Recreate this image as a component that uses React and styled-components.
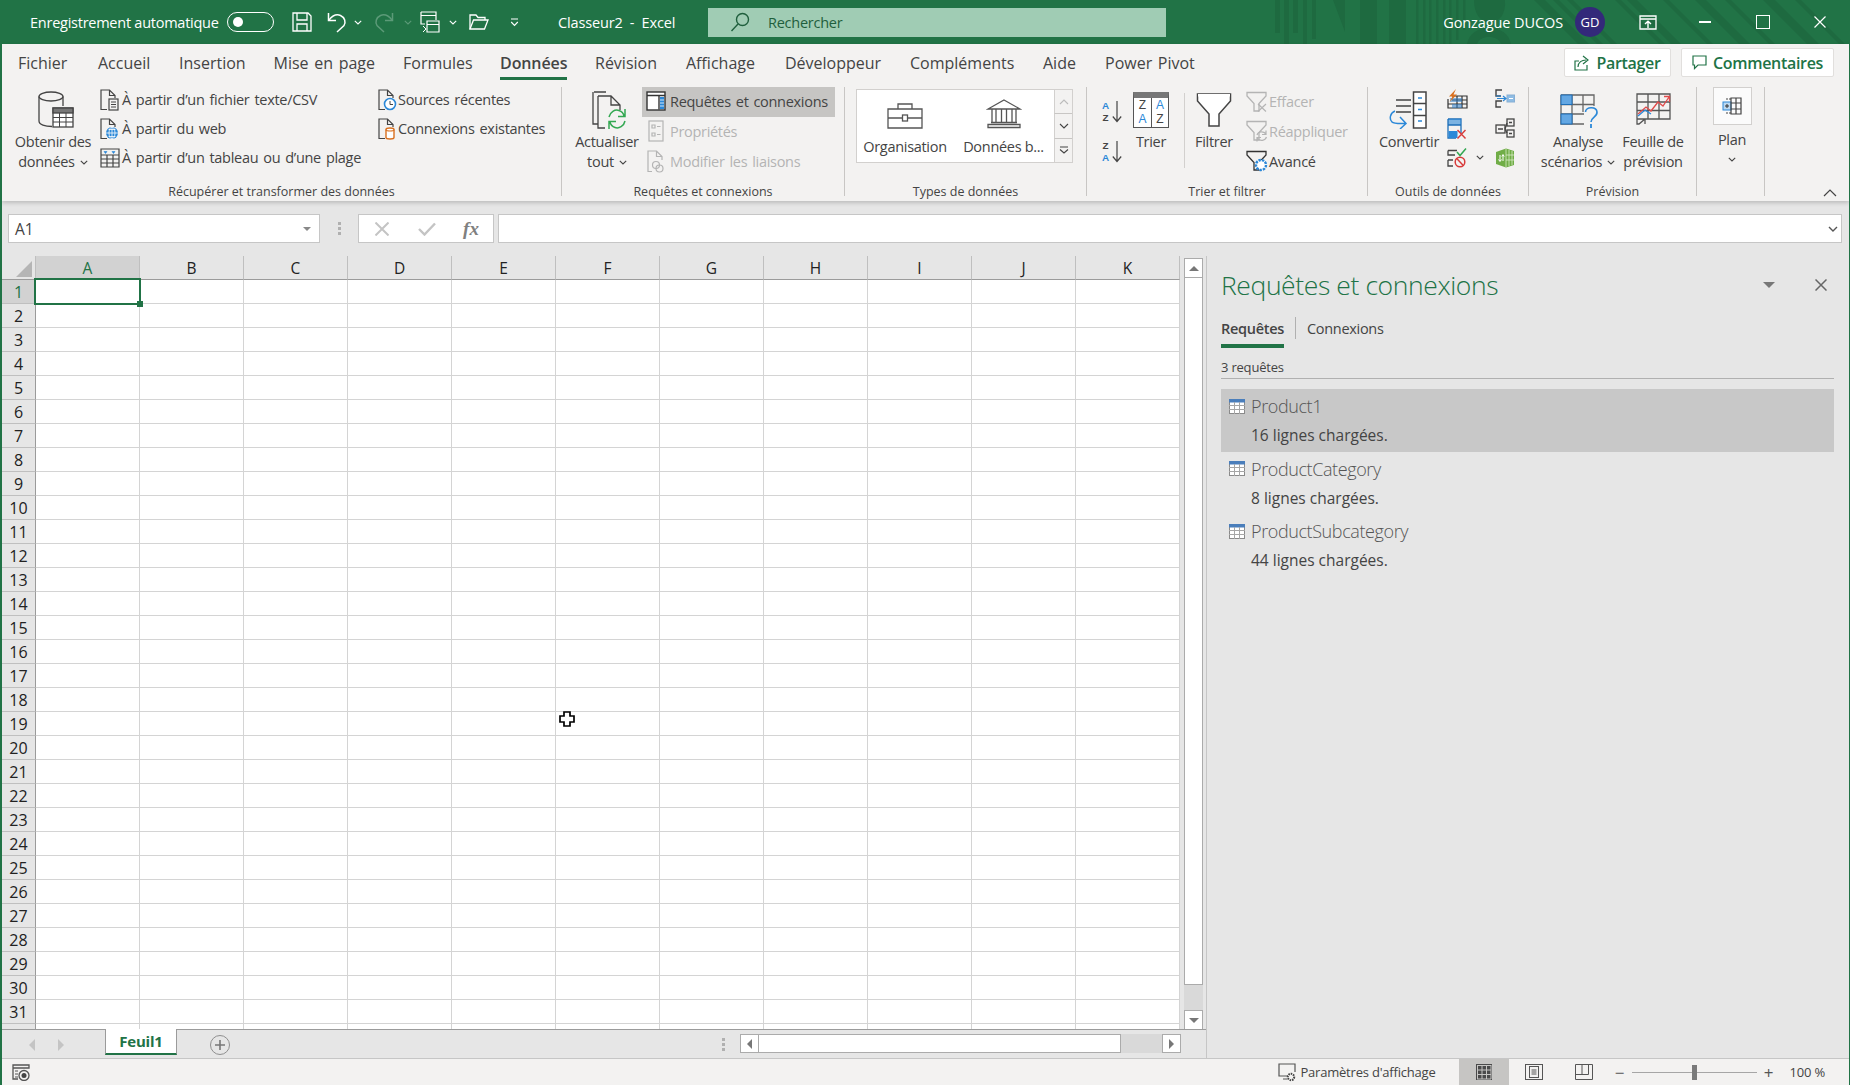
import React from "react";
import styled, {createGlobalStyle} from "styled-components";

const GREEN = "#217346";
const INK = "#444";
const BLUE = "#2b88d8";
const DIM = "#b4b4b4";

const GlobalStyle = createGlobalStyle`
  html, body {
    margin: 0;
    padding: 0;
    overflow: hidden;
    background: #e6e6e6;
  }
  * {
    box-sizing: border-box;
  }
  body {
    font-family: "Open Sans", "Noto Sans", sans-serif;
    color: ${INK};
  }
  svg {
    display: block;
    flex-shrink: 0;
  }
`;

const Svg = ({w, h, children, ...rest}) => (
  <svg width={w} height={h} viewBox={`0 0 ${w} ${h}`} fill="none" {...rest}>{children}</svg>
);

const Chevron = ({color = INK, down = true}) => (
  <Svg w={8} h={5}>
    <path d={down ? "M.8 .8L4 4L7.2 .8" : "M.8 4.2L4 1L7.2 4.2"} stroke={color} strokeWidth="1.1"/>
  </Svg>
);

/* title bar icons */
const SaveIcon = () => (
  <Svg w={20} h={20} stroke="#fff" strokeWidth="1.3">
    <path d="M1 1H16L19 4V19H1Z"/>
    <path d="M5 1V8H15V1M5 19V12H15V19"/>
  </Svg>
);
const UndoIcon = ({color = "#fff"}) => (
  <Svg w={20} h={22} stroke={color} strokeWidth="1.5">
    <path d="M1.5 2V9.5H9"/>
    <path d="M2 9C6 4 10 3 13.5 4.5C18 6.5 19 11 17 14.5L10 21"/>
  </Svg>
);
const RedoIcon = () => (
  <Svg w={20} h={22} stroke="#5c9a78" strokeWidth="1.5">
    <path d="M18.5 2V9.5H11"/>
    <path d="M18 9C14 4 10 3 6.5 4.5C2 6.5 1 11 3 14.5L10 21"/>
  </Svg>
);
const FormIcon = () => (
  <Svg w={20} h={22} stroke="#fff" strokeWidth="1.2">
    <path d="M1 1H16V9M1 1V13H5M1 4.5H16"/>
    <path d="M7 10H19V21H7ZM7 13.5H19"/>
    <path d="M3 15L6 18L3 21" strokeWidth="1"/>
  </Svg>
);
const FolderIcon = () => (
  <Svg w={20} h={16} stroke="#fff" strokeWidth="1.3">
    <path d="M1 15V1H7L9 3.5H16V6"/>
    <path d="M1 15H15.5L19 6H4.5L1 15Z"/>
  </Svg>
);
const CustomizeIcon = () => (
  <Svg w={9} h={9} stroke="#fff" strokeWidth="1.1">
    <path d="M1 1H8M1.2 4L4.5 7.5L7.8 4"/>
  </Svg>
);
const SearchIcon = () => (
  <Svg w={20} h={20} stroke="#1f5f3d" strokeWidth="1.4">
    <circle cx="12.5" cy="7.5" r="6"/>
    <path d="M8 12L1.5 19"/>
  </Svg>
);
const RibbonDisplayIcon = () => (
  <Svg w={18} h={15} stroke="#fff" strokeWidth="1.3">
    <path d="M1 1H17V14H1ZM1 4H17"/>
    <path d="M9 13V6.5M6 9L9 6.2L12 9" strokeWidth="1.4"/>
  </Svg>
);
const TitlePattern = () => (
  <PatternSvg w={574} h={44} fill="#1e6a40">
    <rect x="0" width="5" height="33"/>
    <rect x="9" width="5" height="44"/>
    <rect x="18" width="5" height="33"/>
    <rect x="28" width="4" height="44"/>
    <rect x="37" width="4" height="39"/>
    <path d="M58 0H70V32Z"/>
    <rect x="85" width="17" height="44"/>
    <rect x="114" width="17" height="44"/>
    <rect x="141" width="2.5" height="44"/>
    <rect x="148" width="2.5" height="44"/>
    <rect x="154" width="2.5" height="44"/>
    <rect x="161" width="2.5" height="44"/>
    <rect x="168" width="2.5" height="44"/>
    <rect x="174" width="2.5" height="44"/>
    <rect x="181" width="2.5" height="40"/>
    <rect x="188" width="2.5" height="30"/>
    <path d="M199 0H230C231 14 225 22 215 22C205 22 199 14 199 0Z"/>
    <path d="M192 44C194 34 202 28 214 28C226 28 234 34 236 44H226C224 39 220 37 214 37C208 37 204 39 202 44Z"/>
    <path d="M259 0H270L314 44H303ZM278 0H284L328 44H322ZM292 0H298L342 44H336ZM340 0H346L390 44H384ZM352 0H362L406 44H396ZM388 0H394L438 44H432ZM420 0H431L475 44H464ZM450 0H456L500 44H494ZM488 0H500L544 44H532ZM520 0H526L570 44H564Z"/>
  </PatternSvg>
);

/* get and transform */
const DatabaseIcon = () => (
  <Svg w={36} h={37} stroke={INK} strokeWidth="1.3">
    <ellipse cx="13" cy="5.5" rx="12" ry="4.5"/>
    <path d="M1 5.5V30C1 33.5 7 35.5 14 35.5M25 5.5V15"/>
    <rect x="15" y="17" width="20" height="19" fill="#fff"/>
    <rect x="15" y="17" width="20" height="5" fill="#777"/>
    <path d="M21.5 22V36M28 22V36M15 26.5H35M15 31H35" strokeWidth="1"/>
  </Svg>
);
const DOC = "M7 20.5H1V1H9.5L15 6.5V9M9.5 1V6.5H15";
const DocTextIcon = () => (
  <Svg w={19} h={22} stroke={INK} strokeWidth="1.2">
    <path d={DOC}/>
    <rect x="9" y="10" width="9" height="11" fill="#f3f2f1"/>
    <path d="M11 13H16M11 15.5H16M11 18H16" strokeWidth="1"/>
  </Svg>
);
const DocWebIcon = () => (
  <Svg w={19} h={22} stroke={INK} strokeWidth="1.2">
    <path d={DOC}/>
    <circle cx="12" cy="15" r="6" fill={BLUE} stroke="none"/>
    <path d="M6 15H18M12 9V21M8.5 11.5H15.5M8.5 18.5H15.5" stroke="#fff" strokeWidth=".8"/>
    <ellipse cx="12" cy="15" rx="3" ry="6" stroke="#fff" strokeWidth=".8"/>
  </Svg>
);
const DocClockIcon = () => (
  <Svg w={19} h={22} stroke={INK} strokeWidth="1.2">
    <path d={DOC}/>
    <circle cx="12" cy="15" r="5.5" fill="#fff" stroke={BLUE} strokeWidth="1.6"/>
    <path d="M12 12V15.5H15" strokeWidth="1"/>
  </Svg>
);
const DocDbIcon = () => (
  <Svg w={19} h={22} stroke={INK} strokeWidth="1.2">
    <path d={DOC}/>
    <path d="M8 11.5C8 9.5 16 9.5 16 11.5V19.5C16 21.5 8 21.5 8 19.5Z" fill="#fff" stroke="#d9701f" strokeWidth="1.4"/>
    <path d="M8 11.5C8 13.5 16 13.5 16 11.5" stroke="#d9701f" strokeWidth="1.2"/>
  </Svg>
);
const RangeIcon = () => (
  <Svg w={20} h={20} stroke={INK} strokeWidth="1.2">
    <path d="M1 1H19V19H1ZM1 7H19M1 11H19M1 15H19M7 7V19M13 7V19"/>
    <path d="M4 3.5H7L5.5 5.5ZM12 3.5H15L13.5 5.5Z" fill={BLUE} stroke={BLUE} strokeWidth=".6"/>
  </Svg>
);

/* queries */
const RefreshIcon = () => (
  <Svg w={36} h={38} stroke={INK} strokeWidth="1.3">
    <path d="M2 1H14M1 1V33H6"/>
    <path d="M6 5H19L28 14V19M19 5V14H28M6 5V37H13"/>
    <path d="M17 26C18 21 23 18 27 19.5C30 20.5 31.5 22.5 32 25M33 18V25.5H26" stroke="#33a852" strokeWidth="1.5"/>
    <path d="M33 30C32 35 27 38 23 36.5C20 35.5 18.5 33.5 18 31M17 38V30.5H24" stroke="#33a852" strokeWidth="1.5"/>
  </Svg>
);
const QueriesIcon = () => (
  <Svg w={20} h={20} stroke="#333" strokeWidth="1.4">
    <rect x="1" y="1" width="18" height="18" fill="#fff"/>
    <path d="M1 4.5H19" strokeWidth="1.5"/>
    <path d="M13 5V18.5"/>
    <rect x="14" y="6" width="4" height="12" fill={BLUE} stroke="none"/>
    <path d="M14 9H18M14 12H18M14 15H18" stroke="#fff" strokeWidth=".8"/>
  </Svg>
);
const PropsIcon = () => (
  <Svg w={16} h={22} stroke={DIM} strokeWidth="1.2">
    <rect x="1" y="1" width="14" height="20"/>
    <path d="M4 5H7V8H4ZM4 13H7V16H4ZM9 6.5H12.5M9 14.5H12.5"/>
  </Svg>
);
const EditLinksIcon = () => (
  <Svg w={18} h={23} stroke={DIM} strokeWidth="1.2">
    <path d="M5 21.5H1V1H9.5L15 6.5V10M9.5 1V6.5H15"/>
    <circle cx="9" cy="15" r="3.5"/>
    <circle cx="12.5" cy="18.5" r="3.5"/>
  </Svg>
);

/* data types */
const BriefcaseIcon = () => (
  <Svg w={36} h={26} stroke="#555" strokeWidth="1.3">
    <path d="M1 6H35V25H1ZM1 15H15M21 15H35M11 6V1H25V6"/>
    <rect x="15.5" y="12" width="5" height="6"/>
  </Svg>
);
const BankIcon = () => (
  <Svg w={36} h={30} stroke="#555" strokeWidth="1.3">
    <path d="M18 1L34 10H2Z"/>
    <path d="M6 10V23M10 10V23M15.5 10V23M20.5 10V23M26 10V23M30 10V23M5 23.5H31M2 28.5H34V25.5H2Z"/>
  </Svg>
);
const ScrollBtn = ({kind, disabled}) => (
  <Svg w={10} h={8} stroke={disabled ? "#bbb" : INK} strokeWidth="1.1">
    {kind === "up" && <path d="M1 6L5 2L9 6"/>}
    {kind === "down" && <path d="M1 2L5 6L9 2"/>}
    {kind === "more" && <path d="M1 1H9M1 3.5L5 7L9 3.5"/>}
  </Svg>
);

/* sort and filter */
const SortIcon = ({first, second, firstColor, secondColor}) => (
  <SortIconBox>
    <SortLetters>
      <SortLetter $color={firstColor}>{first}</SortLetter>
      <SortLetter $color={secondColor}>{second}</SortLetter>
    </SortLetters>
    <Svg w={10} h={23}>
      <path d="M5 1V21M.8 16.5L5 21.5L9.2 16.5" stroke={INK} strokeWidth="1.2"/>
    </Svg>
  </SortIconBox>
);
const FunnelIcon = () => (
  <Svg w={36} h={36}>
    <path d="M1.5 2H34.5V9L23 22V34H13V22L1.5 9Z" fill="#fff" stroke={INK} strokeWidth="1.5"/>
    <path d="M2 2H34V4.5H2Z" fill="#fff"/>
  </Svg>
);
const SmallFunnel = ({color}) => (
  <path d="M1 1.5H20V5L13 12.5V20H8V12.5L1 5Z" stroke={color} strokeWidth="1.3" fill="none"/>
);
const FilterClearIcon = () => (
  <Svg w={22} h={21}>
    <SmallFunnel color={DIM}/>
    <path d="M12 13L20 20.5M20 13L12 20.5" stroke={DIM} strokeWidth="1.2"/>
  </Svg>
);
const FilterReapplyIcon = () => (
  <Svg w={22} h={22}>
    <SmallFunnel color={DIM}/>
    <path d="M11 15C12 11.5 17 10.5 20 14M20 10.5V14.5H16M20.5 17C19 21 14 21.5 11.5 18.5M11 21.5V17.5H15" stroke={DIM} strokeWidth="1.2"/>
  </Svg>
);
const FilterAdvancedIcon = () => (
  <Svg w={22} h={22}>
    <SmallFunnel color="#333"/>
    <circle cx="15" cy="15" r="5" fill="#fff" stroke={BLUE} strokeWidth="2.4" strokeDasharray="2.4 1"/>
    <circle cx="15" cy="15" r="1.8" fill="#fff"/>
  </Svg>
);

/* data tools */
const ConvertIcon = () => (
  <Svg w={40} h={38}>
    <path d="M7 9H22M7 15H22M7 21H22" stroke={INK} strokeWidth="1.3"/>
    <path d="M24.5 1H37V37H24.5ZM24.5 12.5H37M24.5 24.5H37" stroke={INK} strokeWidth="1.5" fill="#fff"/>
    <path d="M29 7H33M29 18.5H33M29 30H33" stroke={BLUE} strokeWidth="1.4"/>
    <path d="M6 20C1 22 0 28 3 31C5 33 10 32.5 17 32.5M11 26L17 32.5L11 38" stroke={BLUE} strokeWidth="1.5"/>
  </Svg>
);
const FlashFillIcon = () => (
  <Svg w={21} h={20}>
    <path d="M5 7H20V19H1V10M10 7V19M15 7V19M1 15H20M5 11H20" stroke="#333" strokeWidth="1.2"/>
    <path d="M3 13V9H15V13ZM5 15H15V19H5Z" fill="#2f7ec6" opacity=".55"/>
    <path d="M9 0L2 7.5H5.5L2.5 13L10 5.5H6.5Z" fill="#d9701f"/>
  </Svg>
);
const RemoveDupIcon = () => (
  <Svg w={20} h={21}>
    <path d="M1 1H14V15" stroke="#1e6fb8" strokeWidth="1.3"/>
    <rect x="1" y="1" width="13" height="6" fill="#2b88d8" opacity=".6"/>
    <path d="M1 1V20H9M1 7H14" stroke="#1e6fb8" strokeWidth="1.3"/>
    <rect x="1.5" y="13" width="9" height="7" fill="#2b88d8"/>
    <path d="M10.5 12L18.5 20.5M18.5 12L10.5 20.5" stroke="#d83b3b" strokeWidth="1.4"/>
  </Svg>
);
const ValidateIcon = () => (
  <Svg w={20} h={20}>
    <path d="M1 2.5H10M1 2.5V7H8M1 12V18H6M1 12H6" stroke={INK} strokeWidth="1.3"/>
    <path d="M10 4L13 7.5L19 .5" stroke="#33a852" strokeWidth="1.5"/>
    <circle cx="13" cy="14" r="4.8" stroke="#d83b3b" strokeWidth="1.5"/>
    <path d="M9.7 10.5L16.3 17.5" stroke="#d83b3b" strokeWidth="1.5"/>
  </Svg>
);
const ConsolidateIcon = () => (
  <Svg w={20} h={19}>
    <path d="M7 1H1V7H6M7 12H1V18H6" stroke={INK} strokeWidth="1.4"/>
    <path d="M1 7H6M2 9.5H11M8 7L11 9.5L8 12" stroke={BLUE} strokeWidth="1.2"/>
    <rect x="12" y="6" width="7.5" height="7" fill={BLUE} opacity=".5" stroke="#1e6fb8"/>
    <path d="M14 9.5H18" stroke="#fff"/>
  </Svg>
);
const RelationsIcon = () => (
  <Svg w={20} h={20} stroke={INK} strokeWidth="1.3">
    <rect x="1" y="7" width="9" height="8"/>
    <rect x="12" y="1" width="7" height="7"/>
    <rect x="12" y="12" width="7" height="7"/>
    <path d="M3 11H8M14 4.5H17M14 15.5H17M10 11L12 5M10 11L12 15"/>
  </Svg>
);
const PowerPivotIcon = () => (
  <Svg w={20} h={20}>
    <path d="M1 4L11 .5L19 3V17L11 19.5L1 16Z" fill="#70ad47"/>
    <path d="M11 1V19M14 2V18M17 3V17M11 7H19M11 12H19" stroke="#d9ecc8" strokeWidth=".8"/>
    <path d="M5 7V13M3.5 11.5L5 13.5L6.5 11.5M8 13V7M6.8 8.5L8 6.5L9.2 8.5" stroke="#fff" strokeWidth="1"/>
  </Svg>
);

/* forecast and outline */
const WhatIfIcon = () => (
  <Svg w={40} h={36}>
    <path d="M1 1H34V12M1 1V30H24M12 1V30M23 1V18M1 10.5H34M1 20H24" stroke="#666" strokeWidth="1.3"/>
    <rect x="1" y="1" width="11" height="9.5" fill="#63a7e3" stroke="#1e6fb8"/>
    <rect x="1" y="20" width="11" height="10" fill="#63a7e3" stroke="#1e6fb8"/>
    <path d="M25.5 18C25.5 12.5 36.5 12 37 18C37.5 23 31 23 31 28" stroke={BLUE} strokeWidth="1.6"/>
    <path d="M31 30V34" stroke={BLUE} strokeWidth="1.8"/>
  </Svg>
);
const ForecastIcon = () => (
  <Svg w={35} h={32}>
    <path d="M1 1H34V26H9L3 31H1ZM1 1V26H9V31M1 9H34M1 17.5H34M12 1V26M23 1V26" stroke="#555" strokeWidth="1.3" fill="#f3f2f1"/>
    <path d="M2 21L10 14L15 18L22 9L27 13L33 4M28 3.5H33.5V9" stroke="#e04b4b" strokeWidth="1.3"/>
    <path d="M2 23L9 17L15 21" stroke={BLUE} strokeWidth="1.3"/>
  </Svg>
);
const OutlineIcon = () => (
  <Svg w={20} h={18}>
    <rect x="1" y="5" width="8" height="8" fill="#bcd8f0" stroke={BLUE}/>
    <path d="M3 9H7M5 7V11" stroke="#333"/>
    <path d="M4 2H9M4 16H9" stroke={INK} strokeDasharray="2 1"/>
    <path d="M9 1H19V17H9ZM9 6H19M9 12H19M14 1V17" stroke={INK} strokeWidth="1.2"/>
  </Svg>
);
const ShareIcon = () => (
  <Svg w={16} h={16} stroke={GREEN} strokeWidth="1.2">
    <path d="M5 6H1V15H13V10"/>
    <path d="M4 12C4 7 8 5 12 5M9 1L14 5L9 9"/>
  </Svg>
);
const CommentIcon = () => (
  <Svg w={15} h={15} stroke={GREEN} strokeWidth="1.2">
    <path d="M1 1H14V10H6L2.5 13.5V10H1Z"/>
  </Svg>
);
const CloseIcon = ({size = 12, color = "#fff", weight = 1.2}) => (
  <Svg w={size} h={size}>
    <path d={`M.5 .5L${size - .5} ${size - .5}M${size - .5} .5L.5 ${size - .5}`} stroke={color} strokeWidth={weight}/>
  </Svg>
);
const TableIcon = () => (
  <Svg w={16} h={15}>
    <rect x=".5" y=".5" width="15" height="14" fill="#fff" stroke="#8a8a8a"/>
    <rect x="0" y="0" width="16" height="3.5" fill="#4a7ebb"/>
    <path d="M5.5 3V15M10.5 3V15M0 6.5H16M0 10.5H16" stroke="#a6a6a6"/>
  </Svg>
);
const Triangle = ({dir, size = 5, color = "#777"}) => {
  const s = size;
  const paths = {
    up: `M${s} 0L${s * 2} ${s}H0Z`,
    down: `M0 0H${s * 2}L${s} ${s}Z`,
    left: `M${s} 0V${s * 2}L0 ${s}Z`,
    right: `M0 0L${s} ${s}L0 ${s * 2}Z`,
  };
  const flat = dir === "up" || dir === "down";
  return <Svg w={flat ? s * 2 : s} h={flat ? s : s * 2}><path d={paths[dir]} fill={color}/></Svg>;
};

/* status bar icons */
const MacroIcon = () => (
  <Svg w={18} h={17}>
    <path d="M1 1H17V4H1ZM1 4V15H6" stroke="#555" strokeWidth="1.3"/>
    <path d="M3 7H6M3 10H6M3 13H6" stroke="#555"/>
    <circle cx="12" cy="11.5" r="5" stroke="#555" strokeWidth="1.3" fill="#f3f2f1"/>
    <circle cx="12" cy="11.5" r="2.5" fill="#444"/>
  </Svg>
);
const DisplayIcon = () => (
  <Svg w={18} h={19}>
    <path d="M10 13H1V1H17V9" stroke="#555" strokeWidth="1.2"/>
    <path d="M5 16H9" stroke="#555"/>
    <circle cx="13" cy="14" r="3.2" stroke={INK} strokeWidth="2" strokeDasharray="1.5 .9"/>
  </Svg>
);
const ViewNormalIcon = () => (
  <Svg w={16} h={16}>
    <rect x="0" y="0" width="16" height="16" fill="#4a4a4a"/>
    <path d="M1 1.5H15M1 6H15M1 10.5H15M1 15H15M1.5 1V15M6 1V15M10.5 1V15M15 1V15" stroke="#c6c5c3" strokeWidth="1"/>
  </Svg>
);
const ViewPageIcon = () => (
  <Svg w={18} h={16}>
    <rect x=".5" y=".5" width="17" height="15" stroke="#555"/>
    <rect x="4.5" y="2.5" width="9" height="11" stroke="#555"/>
    <path d="M6.5 6H11.5M6.5 8H11.5M6.5 10H11.5" stroke="#555"/>
  </Svg>
);
const ViewBreakIcon = () => (
  <Svg w={18} h={16}>
    <path d="M.5 .5H17.5V15.5H.5ZM.5 10.5H13.5V.5M7 .5V10.5" stroke="#555"/>
  </Svg>
);
const CrossCursor = () => (
  <Svg w={16} h={16}>
    <path d="M5 1H11V5H15V11H11V15H5V11H1V5H5Z" fill="#fff" stroke="#000" strokeWidth="1.7"/>
  </Svg>
);

const RIBBON_TABS = [
  ["Fichier", 80], ["Accueil", 81], ["Insertion", 94.5], ["Mise en page", 129.5],
  ["Formules", 97], ["Données", 95, true], ["Révision", 91], ["Affichage", 99],
  ["Développeur", 125], ["Compléments", 133], ["Aide", 62], ["Power Pivot", 100],
];
const COLUMNS = ["A", "B", "C", "D", "E", "F", "G", "H", "I", "J", "K"];
const ROWS = Array.from({length: 32}, (_, i) => i + 1);
const QUERIES = [
  {name: "Product1", info: "16 lignes chargées.", active: true},
  {name: "ProductCategory", info: "8 lignes chargées."},
  {name: "ProductSubcategory", info: "44 lignes chargées."},
];

function Group({width, label, children}) {
  return (
    <GroupBox $w={width}>
      <GroupBody>{children}</GroupBody>
      <GroupLabel>{label}</GroupLabel>
    </GroupBox>
  );
}

function BigButton({width, ml = 0, dx = 0, dy = 0, icon, lines, caret}) {
  return (
    <BigBtn $w={width} $ml={ml}>
      <BigIcon $dx={dx} $dy={dy}>{icon}</BigIcon>
      {lines.map((line, i) => (
        <BigText key={line}>
          {line}
          {caret && i === lines.length - 1 && <CaretWrap><Chevron/></CaretWrap>}
        </BigText>
      ))}
    </BigBtn>
  );
}

function SmallButton({icon, text, slot = 25, h = 30, disabled, active}) {
  return (
    <SmallRow $h={h} $active={active} $disabled={disabled}>
      <SmallSlot $w={slot}>{icon}</SmallSlot>
      <span>{text}</span>
    </SmallRow>
  );
}

export default function App() {
  return (
    <Page>
      <GlobalStyle/>
      <TitleBar>
        <TitlePattern/>
        <AutoSave>Enregistrement automatique</AutoSave>
        <Toggle><ToggleKnob/></Toggle>
        <QatBtn $w={40} $ml={8}><SaveIcon/></QatBtn>
        <QatBtn $w={30}><UndoIcon/></QatBtn>
        <QatBtn $w={12}><Chevron color="#fff"/></QatBtn>
        <QatBtn $w={40}><RedoIcon/></QatBtn>
        <QatBtn $w={8}><Chevron color="#5c9a78"/></QatBtn>
        <QatBtn $w={36}><FormIcon/></QatBtn>
        <QatBtn $w={10}><Chevron color="#fff"/></QatBtn>
        <QatBtn $w={42}><FolderIcon/></QatBtn>
        <QatBtn $w={28}><CustomizeIcon/></QatBtn>
        <DocTitle>Classeur2  -  Excel</DocTitle>
        <SearchBox>
          <SearchIcon/>
          <span>Rechercher</span>
        </SearchBox>
        <UserName>Gonzague DUCOS</UserName>
        <Avatar>GD</Avatar>
        <WinBtn><RibbonDisplayIcon/></WinBtn>
        <WinBtn><MinimizeLine/></WinBtn>
        <WinBtn><MaximizeBox/></WinBtn>
        <WinBtn><CloseIcon size={12}/></WinBtn>
      </TitleBar>

      <Ribbon>
        <TabRow>
          {RIBBON_TABS.map(([label, w, active]) => (
            <RibbonTab key={label} $w={w}>
              <RibbonTabLabel $active={active}>{label}</RibbonTabLabel>
            </RibbonTab>
          ))}
          <ShareBar>
            <ActionBtn $w={107}><ShareIcon/>Partager</ActionBtn>
            <ActionBtn $w={153}><CommentIcon/>Commentaires</ActionBtn>
          </ShareBar>
        </TabRow>

        <GroupRow>
          <Group width={560} label="Récupérer et transformer des données">
            <BigButton width={78} ml={12} dx={3} icon={<DatabaseIcon/>} lines={["Obtenir des", "données"]} caret/>
            <SmallCol $w={279} $ml={5} $top={-1}>
              <SmallButton h={29} icon={<DocTextIcon/>} text="À partir d’un fichier texte/CSV"/>
              <SmallButton h={29} icon={<DocWebIcon/>} text="À partir du web"/>
              <SmallButton h={29} icon={<RangeIcon/>} text="À partir d’un tableau ou d’une plage"/>
            </SmallCol>
            <SmallCol $top={-1}>
              <SmallButton h={29} slot={22} icon={<DocClockIcon/>} text="Sources récentes"/>
              <SmallButton h={29} slot={22} icon={<DocDbIcon/>} text="Connexions existantes"/>
            </SmallCol>
          </Group>

          <Group width={283} label="Requêtes et connexions">
            <BigButton width={70} ml={10} dx={3} icon={<RefreshIcon/>} lines={["Actualiser", "tout"]} caret/>
            <SmallCol $w={193}>
              <SmallButton slot={28} active icon={<QueriesIcon/>} text="Requêtes et connexions"/>
              <SmallButton slot={28} disabled icon={<PropsIcon/>} text="Propriétés"/>
              <SmallButton slot={28} disabled icon={<EditLinksIcon/>} text="Modifier les liaisons"/>
            </SmallCol>
          </Group>

          <Group width={242} label="Types de données">
            <Gallery>
              <GalleryItem $w={96}><BriefcaseIcon/><span>Organisation</span></GalleryItem>
              <GalleryItem $w={101}><BankIcon/><span>Données b...</span></GalleryItem>
              <GallerySpin>
                <SpinBtn><ScrollBtn kind="up" disabled/></SpinBtn>
                <SpinBtn><ScrollBtn kind="down"/></SpinBtn>
                <SpinBtn><ScrollBtn kind="more"/></SpinBtn>
              </GallerySpin>
            </Gallery>
          </Group>

          <Group width={281} label="Trier et filtrer">
            <SortCol>
              <SortIcon first="A" second="Z" firstColor={BLUE} secondColor={INK}/>
              <SortIcon first="Z" second="A" firstColor={INK} secondColor={BLUE}/>
            </SortCol>
            <BigButton
              width={44}
              ml={7}
              icon={(
                <SortBox>
                  <SortBoxCol><BoxLetter>Z</BoxLetter><BoxLetter $blue>A</BoxLetter></SortBoxCol>
                  <SortBoxCol><BoxLetter $blue>A</BoxLetter><BoxLetter>Z</BoxLetter></SortBoxCol>
                </SortBox>
              )}
              lines={["Trier"]}
            />
            <GroupRule/>
            <BigButton width={48} ml={5} icon={<FunnelIcon/>} lines={["Filtrer"]}/>
            <SmallCol $ml={7}>
              <SmallButton slot={24} disabled icon={<FilterClearIcon/>} text="Effacer"/>
              <SmallButton slot={24} disabled icon={<FilterReapplyIcon/>} text="Réappliquer"/>
              <SmallButton slot={24} icon={<FilterAdvancedIcon/>} text="Avancé"/>
            </SmallCol>
          </Group>

          <Group width={161} label="Outils de données">
            <BigButton width={62} ml={10} icon={<ConvertIcon/>} lines={["Convertir"]}/>
            <ToolGrid>
              <ToolCell><FlashFillIcon/></ToolCell>
              <ToolCell><ConsolidateIcon/></ToolCell>
              <ToolCell><RemoveDupIcon/></ToolCell>
              <ToolCell><RelationsIcon/></ToolCell>
              <ToolCell><ValidateIcon/><ToolCaret><Chevron/></ToolCaret></ToolCell>
              <ToolCell><PowerPivotIcon/></ToolCell>
            </ToolGrid>
          </Group>

          <Group width={168} label="Prévision">
            <BigButton width={78} ml={10} dx={2} dy={2} icon={<WhatIfIcon/>} lines={["Analyse", "scénarios"]} caret/>
            <BigButton width={68} ml={2} dy={-1} icon={<ForecastIcon/>} lines={["Feuille de", "prévision"]}/>
          </Group>

          <PlanGroup>
            <PlanBox><OutlineIcon/></PlanBox>
            <PlanText>Plan</PlanText>
            <Chevron/>
          </PlanGroup>

          <CollapseBtn><Svg w={14} h={8}><path d="M1 7L7 1L13 7" stroke={INK} strokeWidth="1.2"/></Svg></CollapseBtn>
        </GroupRow>
      </Ribbon>

      <FormulaBar>
        <NameBox>
          <span>A1</span>
          <Triangle dir="down" size={4} color="#888"/>
        </NameBox>
        <GripSlot><Grip/></GripSlot>
        <FormulaBtns>
          <FormulaBtn $w={45}><CloseIcon size={14} color="#c4c4c4" weight={2}/></FormulaBtn>
          <FormulaBtn $w={45}>
            <Svg w={18} h={14}><path d="M1 7L6.5 12.5L17 1.5" stroke="#c4c4c4" strokeWidth="2.4"/></Svg>
          </FormulaBtn>
          <FormulaBtn $w={44}><FxText>fx</FxText></FormulaBtn>
        </FormulaBtns>
        <FormulaInput>
          <Svg w={10} h={6}><path d="M1 1L5 5L9 1" stroke="#555" strokeWidth="1.4"/></Svg>
        </FormulaInput>
      </FormulaBar>

      <Main>
        <Sheet>
          <SheetTop>
            <Grid>
              <GridRow>
                <CornerCell><CornerMark/></CornerCell>
                {COLUMNS.map((c) => <ColHead key={c} $active={c === "A"}>{c}</ColHead>)}
              </GridRow>
              {ROWS.map((r) => (
                <GridRow key={r}>
                  <RowHead $active={r === 1}>{r === 32 ? "" : r}</RowHead>
                  {COLUMNS.map((c) => <Cell key={c}/>)}
                </GridRow>
              ))}
              <Selection><FillHandle/></Selection>
              <CursorMark><CrossCursor/></CursorMark>
            </Grid>
            <VScroll>
              <ScrollEnd><Triangle dir="up" color="#777"/></ScrollEnd>
              <VThumb/>
              <VTrack/>
              <ScrollEnd><Triangle dir="down" color="#777"/></ScrollEnd>
            </VScroll>
          </SheetTop>
          <SheetTabs>
            <SheetNav>
              <Triangle dir="left" size={6} color="#c4c4c4"/>
              <Triangle dir="right" size={6} color="#c4c4c4"/>
            </SheetNav>
            <SheetTab>Feuil1</SheetTab>
            <AddSheet>
              <Svg w={10} h={10}><path d="M5 0V10M0 5H10" stroke="#777" strokeWidth="1.6"/></Svg>
            </AddSheet>
            <GripSlot $w={34} $auto><Grip/></GripSlot>
            <HScroll>
              <HEnd><Triangle dir="left" color="#777"/></HEnd>
              <HThumb/>
              <HTrack/>
              <HEnd><Triangle dir="right" color="#777"/></HEnd>
            </HScroll>
          </SheetTabs>
        </Sheet>

        <Panel>
          <PanelHead>
            <PanelTitle>Requêtes et connexions</PanelTitle>
            <PanelTools>
              <Triangle dir="down" size={6} color="#777"/>
              <CloseIcon size={12} color="#666" weight={1.5}/>
            </PanelTools>
          </PanelHead>
          <PanelTabs>
            <PanelTab $active>Requêtes</PanelTab>
            <PanelTabDivider/>
            <PanelTab>Connexions</PanelTab>
          </PanelTabs>
          <QueryCount>3 requêtes</QueryCount>
          {QUERIES.map((q) => (
            <QueryItem key={q.name} $active={q.active}>
              <QueryHead>
                <TableIcon/>
                <QueryName>{q.name}</QueryName>
              </QueryHead>
              <QueryInfo>{q.info}</QueryInfo>
            </QueryItem>
          ))}
        </Panel>
      </Main>

      <StatusBar>
        <MacroSlot><MacroIcon/></MacroSlot>
        <DisplaySettings><DisplayIcon/>Paramètres d'affichage</DisplaySettings>
        <ViewBtn $active $ml={23}><ViewNormalIcon/></ViewBtn>
        <ViewBtn><ViewPageIcon/></ViewBtn>
        <ViewBtn><ViewBreakIcon/></ViewBtn>
        <ZoomGlyph $ml={5}>−</ZoomGlyph>
        <ZoomTrack><ZoomThumb/></ZoomTrack>
        <ZoomGlyph>+</ZoomGlyph>
        <ZoomValue>100 %</ZoomValue>
      </StatusBar>
    </Page>
  );
}

const Page = styled.div`
  width: 1850px;
  height: 1085px;
  display: flex;
  flex-direction: column;
  border-left: 2px solid ${GREEN};
  border-right: 1px solid ${GREEN};
  overflow: hidden;
  background: #e6e6e6;
`;

const TitleBar = styled.header`
  position: relative;
  height: 44px;
  flex-shrink: 0;
  display: flex;
  align-items: center;
  padding-left: 28px;
  background: ${GREEN};
  color: #fff;
  font-size: 14.5px;
  letter-spacing: -0.25px;
`;

const PatternSvg = styled(Svg)`
  position: absolute;
  right: 0;
  top: 0;
`;

const AutoSave = styled.span`
  width: 197px;
  white-space: nowrap;
  position: relative;
`;

const Toggle = styled.div`
  width: 47px;
  height: 20px;
  display: flex;
  align-items: center;
  padding-left: 5px;
  border: 1.5px solid #fff;
  border-radius: 10px;
`;

const ToggleKnob = styled.div`
  width: 10px;
  height: 10px;
  border-radius: 50%;
  background: #fff;
`;

const QatBtn = styled.div`
  width: ${(p) => p.$w}px;
  margin-left: ${(p) => p.$ml || 0}px;
  height: 30px;
  display: flex;
  align-items: center;
  justify-content: center;
`;

const DocTitle = styled.span`
  width: 150px;
  margin-left: 30px;
  white-space: pre;
  letter-spacing: -0.15px;
`;

const SearchBox = styled.div`
  width: 458px;
  height: 29px;
  display: flex;
  align-items: center;
  gap: 18px;
  padding-left: 22px;
  background: #a0ccb4;
  color: #1f5f3d;
`;

const UserName = styled.span`
  position: relative;
  margin-left: auto;
  white-space: nowrap;
  letter-spacing: -0.1px;
`;

const Avatar = styled.div`
  position: relative;
  width: 30px;
  height: 30px;
  margin: 0 14px 0 12px;
  display: flex;
  align-items: center;
  justify-content: center;
  border-radius: 50%;
  background: #33297a;
  font-size: 13px;
  letter-spacing: 0;
`;

const WinBtn = styled.div`
  position: relative;
  width: 57.5px;
  height: 44px;
  display: flex;
  align-items: center;
  justify-content: center;
`;

const MinimizeLine = styled.div`
  width: 12px;
  height: 1.5px;
  background: #fff;
`;

const MaximizeBox = styled.div`
  width: 14px;
  height: 14px;
  border: 1.3px solid #fff;
`;

const Ribbon = styled.section`
  position: relative;
  z-index: 2;
  height: 157px;
  flex-shrink: 0;
  background: #f3f2f1;
  box-shadow: 0 2px 4px rgba(0, 0, 0, 0.18);
`;

const TabRow = styled.nav`
  height: 36px;
  display: flex;
  padding-left: 16px;
  font-size: 16px;
  word-spacing: 1.5px;
`;

const RibbonTab = styled.div`
  width: ${(p) => p.$w}px;
  flex-shrink: 0;
`;

const RibbonTabLabel = styled.span`
  display: inline-block;
  height: 36px;
  line-height: 38px;
  white-space: nowrap;
  color: #444;
  font-weight: ${(p) => (p.$active ? 600 : 400)};
  letter-spacing: ${(p) => (p.$active ? "-0.1px" : "0")};
  border-bottom: ${(p) => (p.$active ? `3px solid ${GREEN}` : "none")};
`;

const ShareBar = styled.div`
  margin-left: auto;
  margin-right: 15px;
  padding-top: 4px;
  display: flex;
  gap: 10px;
`;

const ActionBtn = styled.div`
  width: ${(p) => p.$w}px;
  height: 29px;
  display: flex;
  align-items: center;
  justify-content: center;
  gap: 6px;
  background: #fff;
  border: 1px solid #e1dfdd;
  border-radius: 2px;
  color: ${GREEN};
  font-weight: 600;
  font-size: 16px;
  letter-spacing: -0.3px;
`;

const GroupRow = styled.div`
  position: relative;
  display: flex;
  padding-top: 7px;
`;

const GroupBox = styled.div`
  width: ${(p) => p.$w}px;
  height: 109px;
  flex-shrink: 0;
  display: flex;
  flex-direction: column;
  border-right: 1px solid #c8c6c4;
`;

const GroupBody = styled.div`
  height: 96px;
  flex-shrink: 0;
  display: flex;
  align-items: flex-start;
`;

const GroupLabel = styled.div`
  height: 18px;
  flex-shrink: 0;
  line-height: 18px;
  text-align: center;
  font-size: 12.5px;
  color: #444;
  white-space: nowrap;
`;

const BigBtn = styled.div`
  width: ${(p) => p.$w}px;
  margin-left: ${(p) => p.$ml}px;
  flex-shrink: 0;
  display: flex;
  flex-direction: column;
  align-items: center;
  font-size: 14.5px;
  letter-spacing: -0.3px;
  color: #444;
`;

const BigIcon = styled.div`
  height: 45px;
  display: flex;
  align-items: center;
  justify-content: center;
  transform: translate(${(p) => p.$dx}px, ${(p) => p.$dy}px);
`;

const BigText = styled.div`
  height: 20px;
  line-height: 20px;
  white-space: nowrap;
  display: flex;
  align-items: center;
`;

const CaretWrap = styled.span`
  margin-left: 5px;
`;

const SmallCol = styled.div`
  width: ${(p) => (p.$w ? `${p.$w}px` : "auto")};
  margin-left: ${(p) => p.$ml || 0}px;
  margin-top: ${(p) => p.$top || 0}px;
  flex-shrink: 0;
  display: flex;
  flex-direction: column;
`;

const SmallRow = styled.div`
  height: ${(p) => p.$h}px;
  padding-bottom: 2px;
  display: flex;
  align-items: center;
  white-space: nowrap;
  font-size: 14.5px;
  letter-spacing: -0.3px;
  word-spacing: 1.5px;
  background: ${(p) => (p.$active ? "#c6c5c3" : "transparent")};
  color: ${(p) => (p.$disabled ? DIM : "#444")};
`;

const SmallSlot = styled.div`
  width: ${(p) => p.$w}px;
  flex-shrink: 0;
  display: flex;
  justify-content: center;
`;

const Gallery = styled.div`
  width: 217px;
  height: 74px;
  margin: 2px 0 0 11px;
  display: flex;
  background: #fff;
  border: 1px solid #d2d0ce;
`;

const GalleryItem = styled.div`
  width: ${(p) => p.$w}px;
  display: flex;
  flex-direction: column;
  align-items: center;
  justify-content: flex-end;
  gap: 8px;
  padding-bottom: 6px;
  font-size: 14.5px;
  letter-spacing: -0.3px;
  white-space: nowrap;
`;

const GallerySpin = styled.div`
  width: 18px;
  margin-left: auto;
  display: flex;
  flex-direction: column;
  background: #f3f2f1;
`;

const SpinBtn = styled.div`
  flex: 1;
  display: flex;
  align-items: center;
  justify-content: center;
  border-left: 1px solid #d2d0ce;
  & + & {
    border-top: 1px solid #c8c6c4;
  }
`;

const SortCol = styled.div`
  margin: 13px 0 0 13px;
  display: flex;
  flex-direction: column;
  gap: 17px;
`;

const SortIconBox = styled.div`
  display: flex;
  align-items: flex-start;
  gap: 1px;
  height: 23px;
  width: 22px;
`;

const SortLetters = styled.div`
  width: 11px;
  display: flex;
  flex-direction: column;
`;

const SortLetter = styled.div`
  height: 11.5px;
  line-height: 11.5px;
  text-align: center;
  font-family: "Liberation Sans", sans-serif;
  font-size: 9.9px;
  font-weight: 700;
  color: ${(p) => p.$color};
`;

const SortBox = styled.div`
  width: 36px;
  height: 36px;
  display: flex;
  background: #fff;
  border: 1.5px solid #555;
  border-top: 6px solid #777;
`;

const SortBoxCol = styled.div`
  flex: 1;
  display: flex;
  flex-direction: column;
  justify-content: center;
  & + & {
    border-left: 1.5px solid #555;
  }
`;

const BoxLetter = styled.div`
  height: 14px;
  line-height: 14px;
  text-align: center;
  font-family: "Liberation Sans", sans-serif;
  font-size: 12px;
  color: ${(p) => (p.$blue ? BLUE : INK)};
`;

const GroupRule = styled.div`
  width: 1px;
  height: 75px;
  margin: 6px 0 0 11px;
  background: #d2d0ce;
`;

const ToolGrid = styled.div`
  margin: -3px 0 0 7px;
  display: grid;
  grid-template-columns: 48px 20px;
  grid-auto-rows: 29.5px;
`;

const ToolCell = styled.div`
  display: flex;
  align-items: center;
`;

const ToolCaret = styled.span`
  margin-left: 9px;
`;

const PlanGroup = styled.div`
  width: 68px;
  height: 109px;
  flex-shrink: 0;
  padding-left: 3px;
  display: flex;
  flex-direction: column;
  align-items: center;
  border-right: 1px solid #c8c6c4;
  font-size: 14.5px;
  letter-spacing: -0.3px;
`;

const PlanBox = styled.div`
  width: 39px;
  height: 38px;
  display: flex;
  align-items: center;
  justify-content: center;
  background: #fbfbfb;
  border: 1px solid #d2d0ce;
`;

const PlanText = styled.div`
  margin: 5px 0 7px;
  height: 20px;
  line-height: 20px;
`;

const CollapseBtn = styled.div`
  position: absolute;
  right: 12px;
  bottom: -1px;
`;

const FormulaBar = styled.div`
  height: 55px;
  flex-shrink: 0;
  display: flex;
  align-items: flex-start;
  padding: 13px 7px 0 6px;
  background: #e6e6e6;
`;

const NameBox = styled.div`
  width: 312px;
  height: 29px;
  flex-shrink: 0;
  display: flex;
  align-items: center;
  justify-content: space-between;
  padding: 1px 8px 0 6px;
  background: #fff;
  border: 1px solid #c6c6c6;
  font-size: 15.5px;
`;

const GripSlot = styled.div`
  width: ${(p) => p.$w || 38}px;
  height: 29px;
  flex-shrink: 0;
  margin-left: ${(p) => (p.$auto ? "auto" : 0)};
  display: flex;
  align-items: center;
  justify-content: center;
`;

const Grip = styled.div`
  width: 3px;
  height: 13px;
  background: repeating-linear-gradient(#b0b0b0 0 3px, transparent 3px 5px);
`;

const FormulaBtns = styled.div`
  width: 136px;
  height: 29px;
  flex-shrink: 0;
  display: flex;
  align-items: center;
  background: #fff;
  border: 1px solid #c6c6c6;
`;

const FormulaBtn = styled.div`
  width: ${(p) => p.$w}px;
  display: flex;
  justify-content: center;
`;

const FxText = styled.span`
  font-family: "Liberation Serif", serif;
  font-style: italic;
  font-weight: 700;
  font-size: 19px;
  line-height: 20px;
  color: #808080;
`;

const FormulaInput = styled.div`
  flex: 1;
  height: 29px;
  margin-left: 4px;
  display: flex;
  align-items: center;
  justify-content: flex-end;
  padding-right: 3px;
  background: #fff;
  border: 1px solid #c6c6c6;
`;

const Main = styled.main`
  flex: 1;
  min-height: 0;
  display: flex;
`;

const Sheet = styled.div`
  width: 1205px;
  flex-shrink: 0;
  display: flex;
  flex-direction: column;
  border-right: 1px solid #c6c6c6;
`;

const SheetTop = styled.div`
  height: 773px;
  display: flex;
`;

const Grid = styled.div`
  position: relative;
  width: 1178px;
  flex-shrink: 0;
  overflow: hidden;
  background: #fff;
`;

const GridRow = styled.div`
  display: flex;
  height: 24px;
`;

const CornerCell = styled.div`
  position: relative;
  width: 34px;
  flex-shrink: 0;
  background: #e6e6e6;
  border-right: 1px solid #bfbfbf;
  border-bottom: 1px solid #9b9b9b;
`;

const CornerMark = styled.div`
  position: absolute;
  right: 3px;
  bottom: 2px;
  width: 0;
  height: 0;
  border-left: 16px solid transparent;
  border-bottom: 16px solid #b5b5b5;
`;

const ColHead = styled.div`
  width: 104px;
  flex-shrink: 0;
  display: flex;
  align-items: center;
  justify-content: center;
  background: ${(p) => (p.$active ? "#d2d2d2" : "#e6e6e6")};
  color: ${(p) => (p.$active ? GREEN : "#222")};
  border-right: 1px solid #bfbfbf;
  border-bottom: 1px solid #9b9b9b;
  font-size: 15.5px;
`;

const RowHead = styled.div`
  width: 34px;
  flex-shrink: 0;
  padding-top: 1px;
  display: flex;
  align-items: center;
  justify-content: center;
  background: ${(p) => (p.$active ? "#d2d2d2" : "#e6e6e6")};
  color: ${(p) => (p.$active ? GREEN : "#222")};
  border-right: 1px solid #9b9b9b;
  border-bottom: 1px solid #bfbfbf;
  font-size: 16px;
`;

const Cell = styled.div`
  width: 104px;
  flex-shrink: 0;
  border-right: 1px solid #d4d4d4;
  border-bottom: 1px solid #d4d4d4;
`;

const Selection = styled.div`
  position: absolute;
  left: 32px;
  top: 22px;
  width: 107px;
  height: 27px;
  border: 2px solid ${GREEN};
`;

const FillHandle = styled.div`
  position: absolute;
  right: -4px;
  bottom: -4px;
  width: 6px;
  height: 6px;
  background: ${GREEN};
`;

const CursorMark = styled.div`
  position: absolute;
  left: 557px;
  top: 455px;
`;

const VScroll = styled.div`
  width: 19px;
  margin-left: 4px;
  margin-bottom: -1px;
  padding-top: 2px;
  display: flex;
  flex-direction: column;
`;

const ScrollEnd = styled.div`
  height: 20px;
  flex-shrink: 0;
  display: flex;
  align-items: center;
  justify-content: center;
  background: #fff;
  border: 1px solid #ababab;
`;

const VThumb = styled.div`
  height: 707px;
  background: #fff;
  border: 1px solid #ababab;
  border-top: none;
`;

const VTrack = styled.div`
  flex: 1;
  background: #d9d9d9;
`;

const SheetTabs = styled.div`
  height: 29px;
  display: flex;
  background: #e6e6e6;
  border-top: 1px solid #9b9b9b;
`;

const SheetNav = styled.div`
  width: 103px;
  padding: 9px 41px 0 27px;
  display: flex;
  justify-content: space-between;
  align-items: flex-start;
`;

const SheetTab = styled.div`
  width: 72px;
  height: 26px;
  margin-top: -1px;
  display: flex;
  align-items: center;
  justify-content: center;
  background: #fff;
  color: ${GREEN};
  font-size: 15px;
  font-weight: 700;
  letter-spacing: -0.2px;
  border-left: 1px solid #9b9b9b;
  border-right: 1px solid #9b9b9b;
  border-bottom: 2px solid ${GREEN};
`;

const AddSheet = styled.div`
  width: 20px;
  height: 20px;
  margin: 5px 0 0 33px;
  display: flex;
  align-items: center;
  justify-content: center;
  border: 1.5px solid #8f8f8f;
  border-radius: 50%;
`;

const HScroll = styled.div`
  width: 441px;
  height: 19px;
  margin: 4px 25px 0 0;
  display: flex;
`;

const HEnd = styled.div`
  width: 19px;
  display: flex;
  align-items: center;
  justify-content: center;
  background: #fff;
  border: 1px solid #ababab;
`;

const HThumb = styled.div`
  width: 362px;
  background: #fff;
  border: 1px solid #ababab;
  border-left: none;
`;

const HTrack = styled.div`
  flex: 1;
  background: #d9d9d9;
`;

const Panel = styled.aside`
  flex: 1;
  padding: 12px 15px 0 14px;
  background: #e6e6e6;
`;

const PanelHead = styled.div`
  height: 34px;
  display: flex;
  align-items: center;
  justify-content: space-between;
`;

const PanelTitle = styled.h2`
  margin: 0;
  font-size: 26.5px;
  font-weight: 300;
  letter-spacing: -0.4px;
  color: ${GREEN};
  white-space: nowrap;
`;

const PanelTools = styled.div`
  width: 64px;
  margin-right: 7px;
  display: flex;
  align-items: center;
  justify-content: space-between;
`;

const PanelTabs = styled.div`
  height: 32px;
  margin-top: 15px;
  display: flex;
  font-size: 14.5px;
  letter-spacing: -0.3px;
`;

const PanelTab = styled.div`
  width: ${(p) => (p.$active ? "63px" : "auto")};
  height: 31px;
  line-height: 24px;
  font-weight: ${(p) => (p.$active ? 600 : 400)};
  border-bottom: ${(p) => (p.$active ? `4px solid ${GREEN}` : "none")};
  white-space: nowrap;
  color: #444;
`;

const PanelTabDivider = styled.div`
  width: 1px;
  height: 22px;
  margin: 0 11px;
  background: #b0b0b0;
`;

const QueryCount = styled.div`
  height: 30px;
  margin-bottom: 10px;
  padding-top: 9px;
  line-height: 18px;
  font-size: 13px;
  letter-spacing: -0.2px;
  border-bottom: 1px solid #b0b0b0;
`;

const QueryItem = styled.div`
  height: 62.5px;
  padding: 5px 0 0 8px;
  background: ${(p) => (p.$active ? "#c8c8c8" : "transparent")};
`;

const QueryHead = styled.div`
  display: flex;
  align-items: center;
  height: 24px;
  gap: 6px;
`;

const QueryName = styled.div`
  font-size: 18px;
  font-weight: 300;
  letter-spacing: -0.4px;
  color: #555;
`;

const QueryInfo = styled.div`
  margin: 7px 0 0 22px;
  line-height: 20px;
  font-size: 15.5px;
  color: #444;
`;

const StatusBar = styled.footer`
  height: 27px;
  flex-shrink: 0;
  display: flex;
  align-items: center;
  background: #f3f2f1;
  border-top: 1px solid #c6c6c6;
  font-size: 13px;
  letter-spacing: -0.2px;
  color: #444;
`;

const MacroSlot = styled.div`
  padding-left: 10px;
`;

const DisplaySettings = styled.div`
  margin-left: auto;
  display: flex;
  align-items: center;
  gap: 4px;
  white-space: nowrap;
`;

const ViewBtn = styled.div`
  width: 50px;
  height: 26px;
  margin-left: ${(p) => p.$ml || 0}px;
  display: flex;
  align-items: center;
  justify-content: center;
  background: ${(p) => (p.$active ? "#c6c5c3" : "transparent")};
`;

const ZoomGlyph = styled.div`
  width: 12px;
  margin-left: ${(p) => p.$ml || 0}px;
  text-align: center;
  font-size: 17px;
  color: #555;
`;

const ZoomTrack = styled.div`
  position: relative;
  width: 125px;
  height: 1px;
  margin: 0 6px;
  background: #a6a6a6;
`;

const ZoomThumb = styled.div`
  position: absolute;
  left: 60px;
  top: -7px;
  width: 5px;
  height: 15px;
  background: #7a7a7a;
`;

const ZoomValue = styled.div`
  margin: 0 24px 0 15px;
  white-space: nowrap;
`;
